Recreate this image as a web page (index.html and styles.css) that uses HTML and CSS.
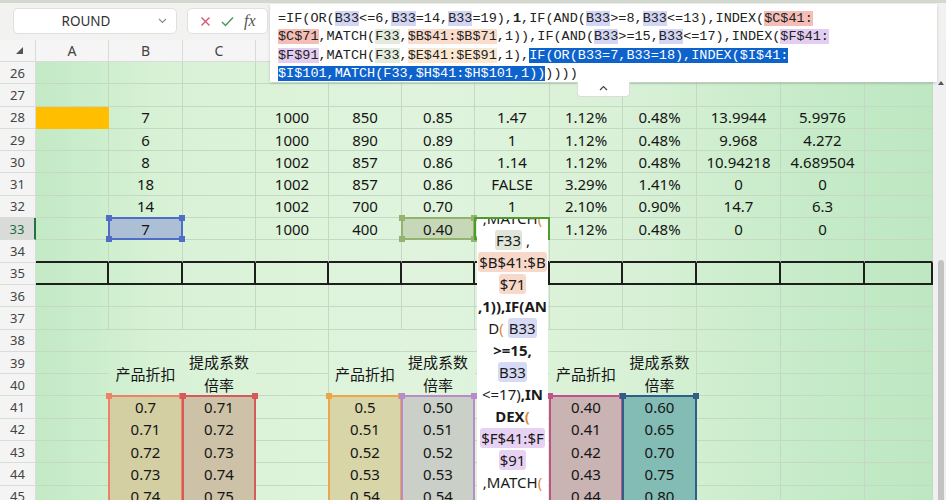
FILE: index.html
```html
<!DOCTYPE html>
<html lang="zh-CN">
<head>
<meta charset="UTF-8">
<meta name="viewport" content="width=device-width, initial-scale=1.0">
<title>提成系数计算表</title>
<link rel="stylesheet" href="styles.css">
</head>
<body>
  <div class="toolbar">
    <div class="namebox">
      <span>ROUND</span>
      <svg width="9" height="6" viewBox="0 0 9 6"><path d="M1 1l3.5 3.5L8 1" fill="none" stroke="#8a8a8a" stroke-width="1.1"/></svg>
    </div>
    <div class="fxbox">
      <svg width="11" height="11" viewBox="0 0 11 11"><path d="M1.5 1.5l8 8M9.5 1.5l-8 8" stroke="#d5536f" stroke-width="1.3"/></svg>
      <svg width="13" height="11" viewBox="0 0 13 11"><path d="M1 6l3.5 3.5L12 1.5" fill="none" stroke="#3f9c5a" stroke-width="1.4"/></svg>
      <span class="fx">fx</span>
    </div>
  </div>

  <!-- expanded formula bar -->
  <div class="formula">
    <div class="line">=IF(OR(<mark class="k1">B33</mark>&lt;=6,<mark class="k1">B33</mark>=14,<mark class="k1">B33</mark>=19),<b>1</b>,IF(AND(<mark class="k1">B33</mark>&gt;=8,<mark class="k1">B33</mark>&lt;=13),INDEX(<mark class="k2">$C$41:</mark></div>
    <div class="line"><mark class="k2">$C$71</mark>,MATCH(<mark class="k3">F33</mark>,<mark class="k4">$B$41:$B$71</mark>,1)),IF(AND(<mark class="k1">B33</mark>&gt;=15,<mark class="k1">B33</mark>&lt;=17),INDEX(<mark class="k5">$F$41:</mark></div>
    <div class="line"><mark class="k5">$F$91</mark>,MATCH(<mark class="k3">F33</mark>,<mark class="k6">$E$41:$E$91</mark>,1),<span class="picked">IF(OR(B33=7,B33=18),INDEX($I$41:</span></div>
    <div class="line"><span class="picked">$I$101,MATCH(F33,$H$41:$H$101,1))</span>))))</div>
  </div>
  <div class="collapse">
    <svg width="9" height="6" viewBox="0 0 9 6"><path d="M1 5l3.5-3.5L8 5" fill="none" stroke="#444" stroke-width="1.2"/></svg>
  </div>

  <div class="main">
    <div class="sheet">
      <div class="hd corner"><svg width="7" height="7" viewBox="0 0 7 7"><path d="M7 0v7H0z" fill="#555"/></svg></div>
      <div class="hd">A</div><div class="hd">B</div><div class="hd">C</div><div class="hd">D</div><div class="hd">E</div><div class="hd">F</div><div class="hd">G</div><div class="hd">H</div><div class="hd">I</div><div class="hd">J</div><div class="hd">K</div><div class="hd">L</div>

      <div class="rh">26</div><div></div><div></div><div></div><div></div><div></div><div></div><div></div><div></div><div></div><div></div><div></div><div></div>
      <div class="rh">27</div><div></div><div></div><div></div><div></div><div></div><div></div><div></div><div></div><div></div><div></div><div></div><div></div>
      <div class="rh">28</div><div class="flag"></div><div>7</div><div></div><div>1000</div><div>850</div><div>0.85</div><div>1.47</div><div>1.12%</div><div>0.48%</div><div>13.9944</div><div>5.9976</div><div></div>
      <div class="rh">29</div><div></div><div>6</div><div></div><div>1000</div><div>890</div><div>0.89</div><div>1</div><div>1.12%</div><div>0.48%</div><div>9.968</div><div>4.272</div><div></div>
      <div class="rh">30</div><div></div><div>8</div><div></div><div>1002</div><div>857</div><div>0.86</div><div>1.14</div><div>1.12%</div><div>0.48%</div><div>10.94218</div><div>4.689504</div><div></div>
      <div class="rh">31</div><div></div><div>18</div><div></div><div>1002</div><div>857</div><div>0.86</div><div>FALSE</div><div>3.29%</div><div>1.41%</div><div>0</div><div>0</div><div></div>
      <div class="rh">32</div><div></div><div>14</div><div></div><div>1002</div><div>700</div><div>0.70</div><div>1</div><div>2.10%</div><div>0.90%</div><div>14.7</div><div>6.3</div><div></div>
      <div class="rh cur">33</div>
      <div></div>
      <div class="fill f-b33">7<span class="sel s-blue"><i></i><i></i><i></i><i></i></span></div>
      <div></div><div>1000</div><div>400</div>
      <div class="fill f-f33">0.40<span class="sel s-green"><i></i><i></i><i></i><i></i></span></div>
      <div class="active">
        <span class="cursor"></span>
        <!-- in-cell editor, scrolled part-way through the formula -->
        <div class="cellpop">
          <div class="flow">
            <p>,MATCH<em>(</em></p>
            <p><mark class="c3">F33</mark> ,</p>
            <p><mark class="c4">$B$41:$B</mark></p>
            <p><mark class="c4">$71</mark></p>
            <p class="bold">,1)),IF(AN</p>
            <p>D<em>(</em> <mark class="c1">B33</mark></p>
            <p class="bold">&gt;=15,</p>
            <p><mark class="c1">B33</mark></p>
            <p>&lt;=17)<b>,IN</b></p>
            <p class="bold">DEX<em>(</em></p>
            <p><mark class="c5">$F$41:$F</mark></p>
            <p><mark class="c5">$91</mark></p>
            <p>,MATCH<em>(</em></p>
          </div>
        </div>
      </div>
      <div>1.12%</div><div>0.48%</div><div>0</div><div>0</div><div></div>

      <div class="rh">34</div><div class="r34"></div><div class="r34"></div><div class="r34"></div><div class="r34"></div><div class="r34"></div><div class="r34"></div><div class="r34"></div><div class="r34"></div><div class="r34"></div><div class="r34"></div><div class="r34"></div><div class="r34"></div>
      <div class="rh">35</div><div class="r35"></div><div class="r35"></div><div class="r35"></div><div class="r35"></div><div class="r35"></div><div class="r35"></div><div class="r35"></div><div class="r35"></div><div class="r35"></div><div class="r35"></div><div class="r35"></div><div class="r35"></div>
      <div class="rh">36</div><div></div><div></div><div></div><div></div><div></div><div></div><div></div><div></div><div></div><div></div><div></div><div></div>
      <div class="rh">37</div><div></div><div></div><div></div><div></div><div></div><div></div><div></div><div></div><div></div><div></div><div></div><div></div>
      <div class="rh">38</div><div class="nv"></div><div class="nv"></div><div class="nv"></div><div></div><div class="nv"></div><div class="nv"></div><div class="nv"></div><div class="nv"></div><div></div><div></div><div></div><div></div>
      <div class="rh">39</div>
      <div class="nv"></div>
      <div class="m2 nv">产品折扣</div>
      <div class="m2 nv"><span>提成系数</span><span>倍率</span></div>
      <div></div>
      <div class="m2 nv">产品折扣</div>
      <div class="m2 nv"><span>提成系数</span><span>倍率</span></div>
      <div class="nv"></div>
      <div class="m2 nv">产品折扣</div>
      <div class="m2"><span>提成系数</span><span>倍率</span></div>
      <div></div><div></div><div></div>
      <div class="rh">40</div><div class="nv"></div><div></div><div class="nv"></div><div></div><div></div><div></div>

      <div class="rh">41</div><div></div>
      <div class="fill f-b">0.7<span class="range rg-b"><i></i><i></i></span></div>
      <div class="fill f-c">0.71<span class="range rg-c"><i></i><i></i></span></div>
      <div></div>
      <div class="fill f-e">0.5<span class="range rg-e"><i></i><i></i></span></div>
      <div class="fill f-f">0.50<span class="range rg-f"><i></i><i></i></span></div>
      <div></div>
      <div class="fill f-h">0.40<span class="range rg-h"><i></i><i></i></span></div>
      <div class="fill f-i">0.60<span class="range rg-i"><i></i><i></i></span></div>
      <div></div><div></div><div></div>
      <div class="rh">42</div><div></div><div class="fill f-b">0.71</div><div class="fill f-c">0.72</div><div></div><div class="fill f-e">0.51</div><div class="fill f-f">0.51</div><div></div><div class="fill f-h">0.41</div><div class="fill f-i">0.65</div><div></div><div></div><div></div>
      <div class="rh">43</div><div></div><div class="fill f-b">0.72</div><div class="fill f-c">0.73</div><div></div><div class="fill f-e">0.52</div><div class="fill f-f">0.52</div><div></div><div class="fill f-h">0.42</div><div class="fill f-i">0.70</div><div></div><div></div><div></div>
      <div class="rh">44</div><div></div><div class="fill f-b">0.73</div><div class="fill f-c">0.74</div><div></div><div class="fill f-e">0.53</div><div class="fill f-f">0.53</div><div></div><div class="fill f-h">0.43</div><div class="fill f-i">0.75</div><div></div><div></div><div></div>
      <div class="rh">45</div><div></div><div class="fill f-b">0.74</div><div class="fill f-c">0.75</div><div></div><div class="fill f-e">0.54</div><div class="fill f-f">0.54</div><div></div><div class="fill f-h">0.44</div><div class="fill f-i">0.80</div><div></div><div></div><div></div>
    </div>

    <div class="vscroll">
      <svg class="up" width="6" height="4" viewBox="0 0 6 4"><path d="M3 0l3 4H0z" fill="#555"/></svg>
      <div class="thumb"></div>
    </div>
  </div>
</body>
</html>
```

FILE: styles.css
```css
* {
    box-sizing: border-box;
}
body {
    margin: 0;
    width: 946px;
    height: 500px;
    overflow: hidden;
    position: relative;
    background-color: #f2f3f1;
    font-family: "Noto Sans", "Noto Sans CJK SC", sans-serif;
    color: #1c1c1c;
}

/* name box + cancel/enter/fx */
.toolbar {
    height: 40px;
    border-top: 3px solid #d3d9ce;
    padding: 5px 0 0 13px;
    display: flex;
    gap: 10px;
}
.namebox {
    width: 164px;
    height: 26px;
    background-color: #fff;
    border: 1px solid #e0e0e0;
    border-radius: 5px;
    display: flex;
    align-items: center;
    font-size: 13.5px;
    color: #333;
}
.namebox span {
    flex: 1;
    text-align: center;
}
.namebox svg {
    margin-right: 9px;
}
.fxbox {
    width: 81px;
    height: 26px;
    background-color: #fff;
    border: 1px solid #e0e0e0;
    border-radius: 5px;
    display: flex;
    align-items: center;
    gap: 10px;
    padding-left: 12px;
}
.fx {
    font-family: "Liberation Serif", serif;
    font-style: italic;
    font-size: 16px;
    color: #555;
}

/* formula bar, opened over the sheet */
.formula {
    position: absolute;
    left: 270px;
    top: 4px;
    width: 667px;
    height: 78px;
    padding: 6px 8px 0;
    background-color: #fff;
    box-shadow: 0 1px 3px rgba(0, 0, 0, 0.18);
    font-family: "Liberation Mono", monospace;
    font-size: 13.5px;
    line-height: 18.3px;
    color: #222;
    z-index: 4;
}
.formula .line {
    white-space: pre;
}
.formula mark {
    color: inherit;
}
.k1 { background-color: #d2d5f3; }
.k2 { background-color: #f4beb6; }
.k3 { background-color: #e2ebdc; }
.k4 { background-color: #fadccd; }
.k5 { background-color: #e3cdf1; }
.k6 { background-color: #fbe8d2; }
.picked {
    background-color: #0d62cc;
    color: #fff;
}
.collapse {
    position: absolute;
    left: 577px;
    top: 82px;
    width: 53px;
    height: 15px;
    background-color: #fff;
    border: 1px solid #dcdcdc;
    border-top: none;
    border-radius: 0 0 4px 4px;
    display: flex;
    justify-content: center;
    padding-top: 3px;
    z-index: 4;
}

/* grid */
.main {
    display: flex;
}
.sheet {
    width: 933px;
    display: grid;
    grid-template-columns: 36px 73px 74px 73px 73px 73px 73px 75px 73px 74px 84px 84px 68px;
    grid-template-rows: 22px;
    grid-auto-rows: 22.3px;
    background: linear-gradient(90deg, #c3e9c5 36px, #cdeecd 100px, #d9f2d7 170px, #e0f4dd 420px, #d9f1d7 620px, #c9ecca 780px, #bde7c1 933px);
}
.sheet > div {
    position: relative;
    display: flex;
    align-items: center;
    justify-content: center;
    border-right: 1px solid #c4d8c3;
    border-bottom: 1px solid #c4d8c3;
    font-size: 15px;
    color: #151515;
    white-space: nowrap;
}
.sheet > .hd {
    background-color: #f4f5f4;
    border-color: #d9dbd9;
    font-size: 14px;
    color: #444;
}
.sheet > .corner {
    justify-content: flex-end;
    align-items: flex-end;
    padding: 0 12px 7px 0;
}
.sheet > .rh {
    background-color: #f3f4f3;
    border-color: #dadcda;
    font-size: 13px;
    color: #444;
}
.sheet > .rh.cur {
    background-color: #d9dbd9;
    color: #1d6f42;
    border-right: 2px solid #217346;
}
.sheet > .flag {
    background-color: #ffbf00;
    border-color: transparent;
}
.sheet > .nv {
    border-right-color: transparent;
}
.sheet > .m2 {
    grid-row: span 2;
    flex-direction: column;
    line-height: 22.3px;
}
.sheet > .r34 {
    border-bottom: 2px solid #1e1e1e;
}
.sheet > .r35 {
    border-bottom: 2px solid #1e1e1e;
    border-right: 2px solid #1e1e1e;
}

/* filled cells hide their gridlines */
.sheet > .fill { border-color: transparent; }
.f-b33 { background-color: #adbfd5; }
.f-f33 { background-color: #c7d8b9; color: #333; }
.f-b { background-color: #d4cfa2; }
.f-c { background-color: #cdc2a7; }
.f-e { background-color: #d8d5a9; }
.f-f { background-color: #cacfc7; }
.f-h { background-color: #c9b3b3; }
.f-i { background-color: #82bcb4; }

/* reference boxes with their corner handles */
.sel,
.range {
    position: absolute;
    z-index: 2;
    left: -1px;
    right: -1px;
    top: -1px;
    border: 2px solid var(--c);
}
.sel { bottom: -1px; }
.range { height: 114px; }
.sel i,
.range i {
    position: absolute;
    width: 6px;
    height: 6px;
    background-color: var(--c);
}
.sel i:nth-child(1), .range i:nth-child(1) { left: -4px; top: -4px; }
.sel i:nth-child(2), .range i:nth-child(2) { right: -4px; top: -4px; }
.sel i:nth-child(3) { left: -4px; bottom: -4px; }
.sel i:nth-child(4) { right: -4px; bottom: -4px; }
.s-blue { --c: #4f6cc6; }
.s-green { --c: #93b36f; }
.rg-b { --c: #ec8268; }
.rg-c { --c: #d65a5a; }
.rg-e { --c: #eca649; }
.rg-f { --c: #b88bca; }
.rg-h { --c: #c2508a; }
.rg-i { --c: #2e5f88; }

/* active cell with its editor */
.cursor {
    position: absolute;
    z-index: 2;
    left: -1px;
    right: -1px;
    top: -1px;
    bottom: -1px;
    border: 2px solid #4f9a2f;
}
.cellpop {
    position: absolute;
    z-index: 3;
    left: 2px;
    top: 1px;
    width: 71px;
    height: 290px;
    overflow: hidden;
    background-color: #fff;
    text-align: center;
    font-size: 15px;
    line-height: 22px;
    color: #1a1a1a;
}
.flow {
    margin-top: -12px;
}
.flow p {
    margin: 0;
}
.flow .bold,
.flow b {
    font-weight: 700;
}
.flow em {
    font-style: normal;
    color: #e08a3c;
}
.flow mark {
    color: inherit;
    border-radius: 3px;
    padding: 0 1px;
}
.c1 { background-color: #d7daf5; }
.c3 { background-color: #e0e5da; }
.c4 { background-color: #f8d9c9; }
.c5 { background-color: #e8d2f3; }

/* vertical scrollbar */
.vscroll {
    flex: 1;
    background-color: #f0f0f0;
    display: flex;
    flex-direction: column;
    align-items: center;
    padding: 41px 0 0 3px;
}
.thumb {
    width: 6px;
    height: 260px;
    margin-top: 175px;
    background-color: #c3c3c3;
    border-radius: 3px;
}
```
